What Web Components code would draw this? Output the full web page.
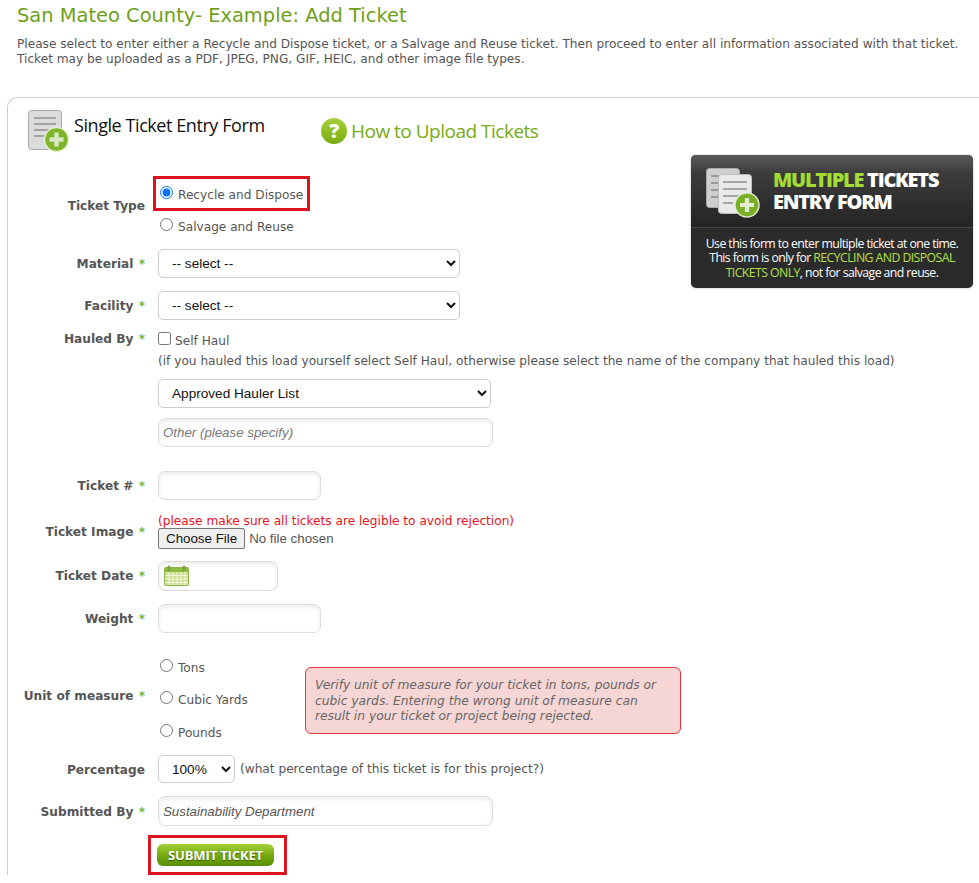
<!DOCTYPE html>
<html>
<head>
<meta charset="utf-8">
<title>Add Ticket</title>
<style>
    html, body { margin: 0; background: #fff; }
    body { font: 12.15px "DejaVu Sans", sans-serif; color: #555; overflow: hidden; }
</style>
</head>
<body>
<page-head heading="San Mateo County- Example: Add Ticket">
    Please select to enter either a Recycle and Dispose ticket, or a Salvage and Reuse ticket. Then proceed to enter all information associated with that ticket.<br>
    Ticket may be uploaded as a PDF, JPEG, PNG, GIF, HEIC, and other image file types.
</page-head>

<form-card>
    <card-head slot="head"></card-head>
    <ticket-banner></ticket-banner>

    <form-row label="Ticket Type" style="--label-top:22px">
        <red-box style="--box-pad:6px 4px 5px 2px">
            <choice-field type="radio" name="kind" checked>Recycle and Dispose</choice-field>
        </red-box>
        <choice-field type="radio" name="kind" style="margin-top:6px">Salvage and Reuse</choice-field>
    </form-row>

    <form-row label="Material" required style="margin-top:14px;--label-top:7px">
        <select-field width="302">-- select --</select-field>
    </form-row>
    <form-row label="Facility" required style="margin-top:13px;--label-top:7px">
        <select-field width="302">-- select --</select-field>
    </form-row>

    <form-row label="Hauled By" required style="margin-top:11px">
        <choice-field type="checkbox">Self Haul</choice-field>
        <div style="margin-top:4px;white-space:nowrap;line-height:16px">(if you hauled this load yourself select Self Haul, otherwise please select the name of the company that hauled this load)</div>
        <select-field width="333" style="margin-top:10px">Approved Hauler List</select-field>
        <text-field width="335" placeholder="Other (please specify)" style="margin-top:10px"></text-field>
    </form-row>

    <form-row label="Ticket #" required style="margin-top:24px;--label-top:7px">
        <text-field width="163"></text-field>
    </form-row>

    <form-row label="Ticket Image" required style="margin-top:12px;--label-top:12px">
        <div style="color:#e8121d;line-height:16px;height:16px;padding-top:1px;box-sizing:border-box;white-space:nowrap">(please make sure all tickets are legible to avoid rejection)</div>
        <file-field></file-field>
    </form-row>

    <form-row label="Ticket Date" required style="margin-top:12px;--label-top:7px">
        <text-field width="120" height="30" calendar></text-field>
    </form-row>
    <form-row label="Weight" required style="margin-top:13px;--label-top:7px">
        <text-field width="163"></text-field>
    </form-row>

    <form-row label="Unit of measure" required style="margin-top:25px;--label-top:30px">
        <div class="units" style="display:flex;align-items:flex-start">
            <div style="width:147px">
                <choice-field type="radio" name="unit" style="height:18px">Tons</choice-field>
                <choice-field type="radio" name="unit" style="margin-top:14px;height:18px">Cubic Yards</choice-field>
                <choice-field type="radio" name="unit" style="margin-top:15px;height:18px">Pounds</choice-field>
            </div>
            <alert-box style="margin-top:9px">Verify unit of measure for your ticket in tons, pounds or cubic yards. Entering the wrong unit of measure can result in your ticket or project being rejected.</alert-box>
        </div>
    </form-row>

    <form-row label="Percentage" style="margin-top:14px;--label-top:7px">
        <div style="display:flex;align-items:center;gap:5px;white-space:nowrap">
            <select-field width="77" height="28">100%</select-field>
            <span>(what percentage of this ticket is for this project?)</span>
        </div>
    </form-row>

    <form-row label="Submitted By" required style="margin-top:13px;--label-top:8px">
        <text-field width="335" height="30" value="Sustainability Department"></text-field>
    </form-row>

    <form-row style="margin-top:9px">
        <red-box style="--box-pad:6px 10px 6px 6px;margin-left:-10px">
            <submit-button>SUBMIT TICKET</submit-button>
        </red-box>
    </form-row>
</form-card>

<script>
class PageHead extends HTMLElement {
    constructor() {
        super();
        this.attachShadow({ mode: 'open' });
    }

    connectedCallback() {
        this.shadowRoot.innerHTML = `
        <style>
            :host { display: block; padding: 4px 17px 0; height: 97px; box-sizing: border-box; }
            h1 {
                margin: 0;
                font: 400 19.45px/24px "DejaVu Sans", sans-serif;
                color: #6f9f1a;
            }
            p {
                margin: 9px 0 0;
                font-size: 12.15px;
                line-height: 15px;
                white-space: nowrap;
                color: #555;
            }
        </style>
        <h1>${this.getAttribute('heading')}</h1>
        <p><slot></slot></p>
        `;
    }
}

class FormCard extends HTMLElement {
    constructor() {
        super();
        this.attachShadow({ mode: 'open' });
    }

    connectedCallback() {
        this.shadowRoot.innerHTML = `
        <style>
            :host {
                display: block;
                margin-left: 7px;
                height: 778px;
                box-sizing: border-box;
                border: 1px solid #ccc;
                border-width: 1px 0 0 1px;
                border-top-left-radius: 10px;
            }
        </style>
        <slot name="head"></slot>
        <slot></slot>
        `;
    }
}

class CardHead extends HTMLElement {
    constructor() {
        super();
        this.attachShadow({ mode: 'open' });
    }

    connectedCallback() {
        this.shadowRoot.innerHTML = `
        <style>
            :host {
                display: flex;
                align-items: flex-start;
                height: 78px;
                padding: 12px 0 0 20px;
                box-sizing: border-box;
                float: left;
                width: 660px;
            }
            .title {
                margin: 4px 0 0 5px;
                font: 400 18px/22px "Open Sans", sans-serif;
                letter-spacing: -.43px;
                color: #111;
                width: 247px;
                white-space: nowrap;
            }
            .help {
                display: flex;
                align-items: center;
                gap: 4px;
                margin-top: 8px;
                font: 400 19px/26px "Open Sans", sans-serif;
                letter-spacing: -.5px;
                color: #76ab12;
                white-space: nowrap;
            }
        </style>
        <svg width="41" height="43" viewBox="0 0 41 43">
            <rect x=".5" y=".5" width="33" height="39" rx="3" fill="#dcdcdc" stroke="#a9a9a9"/>
            <g stroke="#8f8f8f" stroke-width="1.6">
                <path d="M6 8h22M6 14h22M6 20h16M6 26h12"/>
            </g>
            <circle cx="28.5" cy="29.5" r="12" fill="#7fb52a" stroke="#e4efcf" stroke-width="1.5"/>
            <path d="M28.5 22.5v14M21.5 29.5h14" stroke="#dbe8c4" stroke-width="4.4"/>
        </svg>
        <div class="title">Single Ticket Entry Form</div>
        <div class="help">
            <svg width="26" height="26" viewBox="0 0 26 26">
                <defs><linearGradient id="q" x1="0" y1="0" x2="0" y2="1"><stop offset="0" stop-color="#a6d13a"/><stop offset="1" stop-color="#78ad12"/></linearGradient></defs>
                <circle cx="13" cy="13" r="13" fill="url(#q)"/>
                <text x="13" y="20" text-anchor="middle" font-family="Open Sans" font-weight="800" font-size="20" fill="#fff">?</text>
            </svg>
            How to Upload Tickets
        </div>
        `;
    }
}

class TicketBanner extends HTMLElement {
    constructor() {
        super();
        this.attachShadow({ mode: 'open' });
    }

    connectedCallback() {
        this.shadowRoot.innerHTML = `
        <style>
            :host {
                display: block;
                float: right;
                width: 282px;
                height: 133px;
                margin: 57px 6px 0 0;
                border-radius: 5px;
                overflow: hidden;
                background: #2b2b2b;
                color: #fff;
                font-family: "Open Sans", sans-serif;
                text-align: center;
                box-shadow: 0 0 2px rgba(0,0,0,.35);
            }
            .top {
                display: flex;
                height: 73px;
                box-sizing: border-box;
                padding: 13px 0 0 15px;
                background: linear-gradient(#5a5a5a, #3c3c3c 25%, #242424);
                border-bottom: 1px solid #444;
            }
            .big {
                margin: 1px 0 0 13px;
                font: 800 20px/22px "Open Sans", sans-serif;
                letter-spacing: -1.25px;
                text-align: left;
                white-space: nowrap;
            }
            em { font-style: normal; color: #a4dc35; }
            .small {
                padding-top: 8.5px;
                font-size: 12.3px;
                line-height: 14.5px;
                letter-spacing: -.58px;
                white-space: nowrap;
            }
            .small em { color: #b4e04a; }
        </style>
        <div class="top">
            <svg width="54" height="50" viewBox="0 0 54 50">
                <rect x=".5" y=".5" width="33" height="39" rx="3" fill="#cfcfcf" stroke="#aaa"/>
                <path d="M5 8h22M5 15h22M5 22h22M5 29h14" stroke="#888" stroke-width="1.3"/>
                <rect x="12.5" y="6.5" width="33" height="39" rx="3" fill="#e9e9e9" stroke="#bbb"/>
                <path d="M17 14h24M17 21h24M17 28h16M17 35h10" stroke="#8d8d8d" stroke-width="1.3"/>
                <circle cx="41" cy="37" r="12" fill="#79af26" stroke="#dfe9cd" stroke-width="1.5"/>
                <path d="M41 30v14M34 37h14" stroke="#e4edd2" stroke-width="4.2"/>
            </svg>
            <div class="big"><em>MULTIPLE</em> TICKETS<br>ENTRY FORM</div>
        </div>
        <div class="small">
            Use this form to enter multiple ticket at one time.<br>
            This form is only for <em>RECYCLING AND DISPOSAL</em><br>
            <em>TICKETS ONLY</em>, not for salvage and reuse.
        </div>
        `;
    }
}

class FormRow extends HTMLElement {
    constructor() {
        super();
        this.attachShadow({ mode: 'open' });
    }

    connectedCallback() {
        const label = this.getAttribute('label') || '';
        const star = this.hasAttribute('required') ? ' <b>*</b>' : '';
        this.shadowRoot.innerHTML = `
        <style>
            :host {
                display: grid;
                grid-template-columns: 137px 1fr;
                column-gap: 13px;
                clear: left;
            }
            .label {
                padding-top: var(--label-top, 0);
                text-align: right;
                font-weight: 700;
                line-height: 16px;
                color: #555;
                white-space: nowrap;
            }
            b { color: #7fb52a; margin-left: 1px; }
            .field { min-width: 0; }
        </style>
        <div class="label">${label}${star}</div>
        <div class="field"><slot></slot></div>
        `;
    }
}

class RedBox extends HTMLElement {
    constructor() {
        super();
        this.attachShadow({ mode: 'open' });
    }

    connectedCallback() {
        this.shadowRoot.innerHTML = `
        <style>
            :host {
                display: table;
                margin-left: -5px;
                padding: var(--box-pad, 4px);
                border: 3px solid #dc1420;
            }
        </style>
        <slot></slot>
        `;
    }
}

class ChoiceField extends HTMLElement {
    constructor() {
        super();
        this.attachShadow({ mode: 'open' });
    }

    connectedCallback() {
        const type = this.getAttribute('type');
        const name = this.getAttribute('name') || '';
        const checked = this.hasAttribute('checked') ? 'checked' : '';
        this.shadowRoot.innerHTML = `
        <style>
            :host { display: block; line-height: 18px; }
            label { display: flex; align-items: center; gap: 5px; white-space: nowrap; height: 18px; }
            input { width: 13px; height: 13px; margin: 0 0 3px 2px; }
            input[type="checkbox"] { margin: 0 -1px 3px 0; }
            span { padding-top: 2px; }
        </style>
        <label><input type="${type}" name="${name}" ${checked}><span><slot></slot></span></label>
        `;
    }
}

class SelectField extends HTMLElement {
    constructor() {
        super();
        this.attachShadow({ mode: 'open' });
    }

    connectedCallback() {
        const width = this.getAttribute('width');
        const height = this.getAttribute('height') || 29;
        const text = this.textContent.trim();
        this.shadowRoot.innerHTML = `
        <style>
            :host { display: block; width: ${width}px; height: ${height}px; }
            select {
                width: 100%;
                height: 100%;
                padding: 0 0 0 9px;
                box-sizing: border-box;
                border: 1px solid #ccc;
                border-radius: 5px;
                background: #fff;
                color: #111;
                font: 13.6px "Liberation Sans", sans-serif;
            }
        </style>
        <select><option>${text}</option></select>
        `;
    }
}

class TextField extends HTMLElement {
    constructor() {
        super();
        this.attachShadow({ mode: 'open' });
    }

    connectedCallback() {
        const width = this.getAttribute('width');
        const height = this.getAttribute('height') || 29;
        const placeholder = this.getAttribute('placeholder') || '';
        const value = this.getAttribute('value') || '';
        const calendar = this.hasAttribute('calendar');
        this.shadowRoot.innerHTML = `
        <style>
            :host { display: block; position: relative; width: ${width}px; height: ${height}px; }
            input {
                width: 100%;
                height: 100%;
                padding: 0 4px;
                box-sizing: border-box;
                border: 1px solid #ddd;
                border-radius: 7px;
                outline: none;
                background: #fff;
                box-shadow: inset 0 2px 4px rgba(0,0,0,.09);
                font: italic 13.3px "Liberation Sans", sans-serif;
                color: #555;
            }
            input::placeholder { color: #777; opacity: 1; }
            svg { position: absolute; left: 6px; top: 4px; }
        </style>
        <input type="text" placeholder="${placeholder}" value="${value}">
        ${calendar ? `
        <svg width="25" height="21" viewBox="0 0 25 21">
            <rect x=".5" y="2.5" width="24" height="18" rx="1" fill="#c9e08f" stroke="#8db04a"/>
            <rect x="1" y="3" width="23" height="4" fill="#8fbc45"/>
            <path d="M1 10.5h23M1 14h23M1 17.500h23M5 7v13M9 7v13M13 7v13M17 7v13M21 7v13" stroke="#f2f8df" stroke-width="1"/>
            <rect x="3.500" y=".5" width="3" height="6" rx="1.500" fill="#7da53a"/>
            <rect x="18.500" y=".5" width="3" height="6" rx="1.500" fill="#7da53a"/>
        </svg>` : ''}
        `;
    }
}

class FileField extends HTMLElement {
    constructor() {
        super();
        this.attachShadow({ mode: 'open' });
    }

    connectedCallback() {
        this.shadowRoot.innerHTML = `
        <style>
            :host { display: block; }
            input { display: block; font: 13.33px "Liberation Sans", sans-serif; color: #555; }
            input::file-selector-button {
                height: 21px;
                padding: 0 7px;
                margin-right: 4px;
                border: 1px solid #767676;
                border-radius: 2px;
                background: #efefef;
                color: #111;
                font: 13.33px "Liberation Sans", sans-serif;
            }
        </style>
        <input type="file">
        `;
    }
}

class AlertBox extends HTMLElement {
    constructor() {
        super();
        this.attachShadow({ mode: 'open' });
    }

    connectedCallback() {
        this.shadowRoot.innerHTML = `
        <style>
            :host {
                display: block;
                width: 376px;
                height: 67px;
                padding: 10px 9px 0;
                box-sizing: border-box;
                border: 1px solid #e8343c;
                border-radius: 6px;
                background: #f6d5d5;
                font-style: italic;
                font-size: 12.25px;
                line-height: 15.5px;
                color: #666;
            }
        </style>
        <slot></slot>
        `;
    }
}

class SubmitButton extends HTMLElement {
    constructor() {
        super();
        this.attachShadow({ mode: 'open' });
    }

    connectedCallback() {
        this.shadowRoot.innerHTML = `
        <style>
            :host { display: block; }
            button {
                display: block;
                width: 117px;
                height: 22px;
                padding: 0;
                border: 0;
                border-radius: 6px;
                background: linear-gradient(#a5cf3b, #72a80e 55%, #5a8f06);
                color: #fff;
                font: 700 13px "Open Sans", sans-serif;
                letter-spacing: -.15px;
                text-shadow: 0 1px 1px rgba(40,70,0,.8);
            }
        </style>
        <button type="button"><slot></slot></button>
        `;
    }
}

customElements.define('page-head', PageHead);
customElements.define('form-card', FormCard);
customElements.define('card-head', CardHead);
customElements.define('ticket-banner', TicketBanner);
customElements.define('form-row', FormRow);
customElements.define('red-box', RedBox);
customElements.define('choice-field', ChoiceField);
customElements.define('select-field', SelectField);
customElements.define('text-field', TextField);
customElements.define('file-field', FileField);
customElements.define('alert-box', AlertBox);
customElements.define('submit-button', SubmitButton);
</script>
</body>
</html>
